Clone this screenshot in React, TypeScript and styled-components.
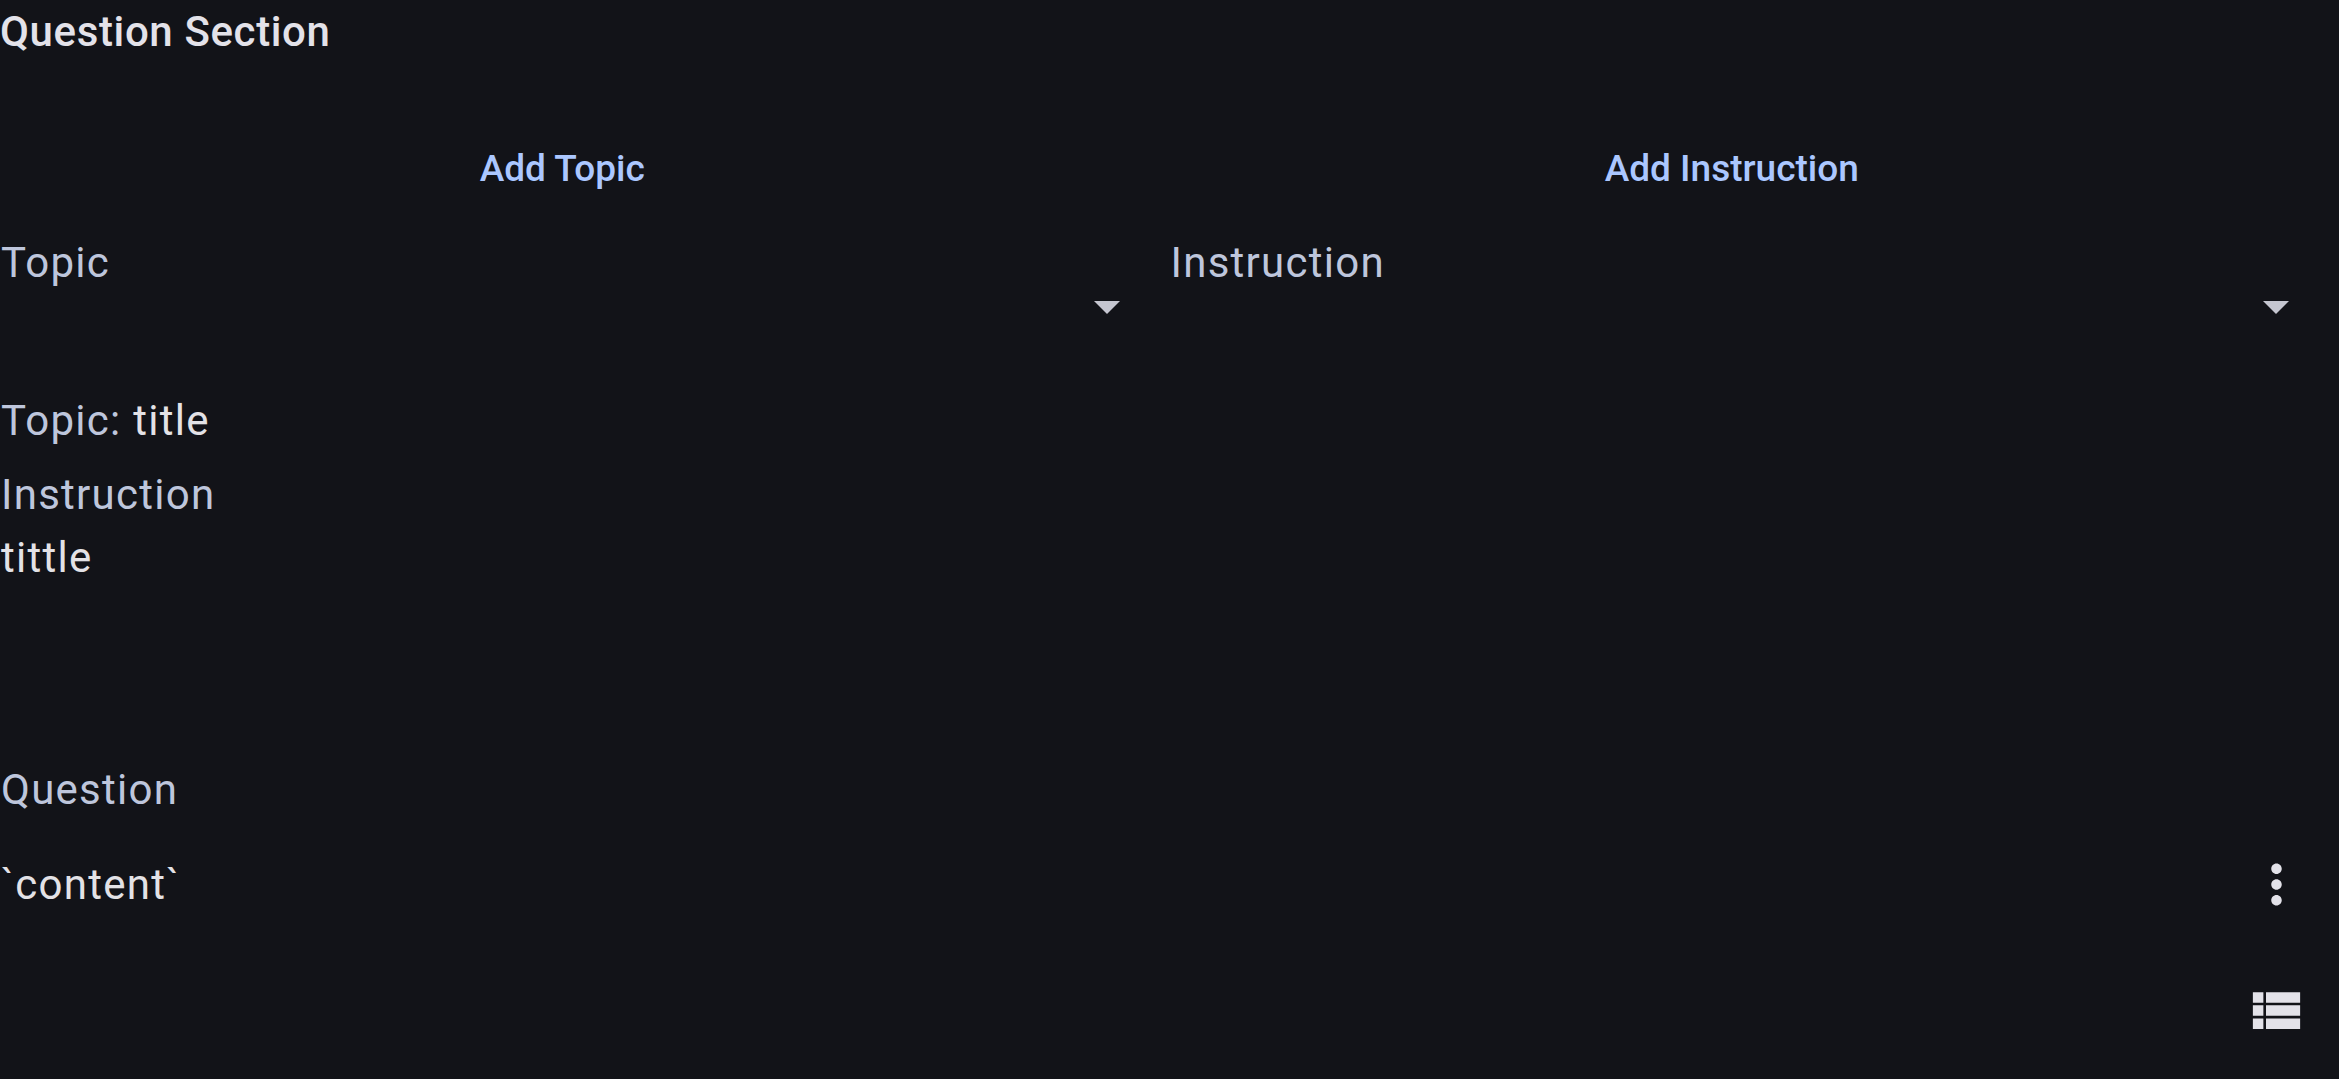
import React from "react";
import styled, { createGlobalStyle } from "styled-components";

const Global = createGlobalStyle`
  *, *::before, *::after { box-sizing: border-box; }
  body { margin: 0; background: #121318; color: #e3e2e9; font-family: Roboto, "Liberation Sans", sans-serif; }
`;

const Page = styled.main`
  display: flex;
  flex-direction: column;
  min-height: 100vh;
  background: #121318;
`;

const Heading = styled.h1`
  margin: 0;
  font-size: 42px;
  line-height: 63px;
  font-weight: 500;
  letter-spacing: 0.015em;
`;

const Columns = styled.div`
  display: grid;
  grid-template-columns: 1fr 1fr;
`;

const ActionRow = styled(Columns)`
  padding: 53px 45px 0 0;
  column-gap: 45px;
`;

const SelectRow = styled(Columns)`
  padding: 10px 0 27px;
`;

const TextButton = styled.button`
  height: 105px;
  padding: 0;
  border: 0;
  background: transparent;
  color: #abc7ff;
  font: 500 37px/53px Roboto, "Liberation Sans", sans-serif;
  cursor: pointer;
`;

const Field = styled.div`
  display: flex;
  flex-direction: column;
`;

const Label = styled.label`
  padding-left: 1px;
  color: #bec6dc;
  font-size: 42px;
  line-height: 63px;
  letter-spacing: 0.03em;
`;

const SelectWrap = styled.div`
  display: grid;
  align-items: center;
  justify-items: end;
  padding-right: 50px;
`;

const Select = styled.select`
  grid-area: 1 / 1;
  width: 100%;
  height: 26px;
  border: 0;
  appearance: none;
  background: transparent;
  color: inherit;
  font: inherit;
`;

const Arrow = styled.svg`
  grid-area: 1 / 1;
  width: 26px;
  height: 13px;
  fill: #c5c6d0;
  pointer-events: none;
`;

const Line = styled.p<{ $muted?: boolean }>`
  margin: 0;
  padding-left: 1px;
  font-size: 42px;
  line-height: 63px;
  letter-spacing: 0.03em;
  color: ${(p) => (p.$muted ? "#bec6dc" : "#e3e2e6")};
`;

const Value = styled.span`
  color: #e3e2e6;
`;

const Summary = styled.section`
  display: flex;
  flex-direction: column;
  padding-top: 42px;
`;

const InstructionBlock = styled.div`
  padding-top: 11px;
`;

const QuestionBlock = styled.section`
  padding-top: 169px;
`;

const QuestionRow = styled.div`
  display: flex;
  align-items: center;
  justify-content: space-between;
`;

const IconButton = styled.button`
  display: grid;
  place-items: center;
  width: 126px;
  height: 126px;
  padding: 0;
  border: 0;
  background: transparent;
  color: #e3e2e9;
  cursor: pointer;
`;

const Icon = styled.svg`
  width: 63px;
  height: 63px;
  fill: currentColor;
`;

const Footer = styled.footer`
  display: flex;
  justify-content: flex-end;
`;

function Picker({ id, label }: { id: string; label: string }) {
  return (
    <Field>
      <Label htmlFor={id}>{label}</Label>
      <SelectWrap>
        <Select id={id} defaultValue=""><option value="" /></Select>
        <Arrow viewBox="0 0 26 13" aria-hidden="true"><path d="M0 0h26L13 13z" /></Arrow>
      </SelectWrap>
    </Field>
  );
}

export default function App() {
  return (
    <Page>
      <Global />
      <Heading>Question Section</Heading>
      <ActionRow>
        <TextButton type="button">Add Topic</TextButton>
        <TextButton type="button">Add Instruction</TextButton>
      </ActionRow>
      <SelectRow>
        <Picker id="topic" label="Topic" />
        <Picker id="instruction" label="Instruction" />
      </SelectRow>
      <Summary>
        <Line $muted>Topic: <Value>title</Value></Line>
        <InstructionBlock>
          <Line $muted>Instruction</Line>
          <Line>tittle</Line>
        </InstructionBlock>
      </Summary>
      <QuestionBlock>
        <Line $muted>Question</Line>
        <QuestionRow>
          <Line>`content`</Line>
          <IconButton type="button" aria-label="More options">
            <Icon viewBox="0 0 24 24"><path d="M12 8c1.100 0 2-.9 2-2s-.9-2-2-2-2 .9-2 2 .9 2 2 2zm0 2c-1.100 0-2 .9-2 2s.9 2 2 2 2-.9 2-2-.9-2-2-2zm0 6c-1.100 0-2 .9-2 2s.9 2 2 2 2-.9 2-2-.9-2-2-2z" /></Icon>
          </IconButton>
        </QuestionRow>
      </QuestionBlock>
      <Footer>
        <IconButton type="button" aria-label="List view">
          <Icon viewBox="0 0 24 24"><path d="M3 14h4v-4H3v4zm0 5h4v-4H3v4zM3 9h4V5H3v4zm5 5h13v-4H8v4zm0 5h13v-4H8v4zM8 5v4h13V5H8z" /></Icon>
        </IconButton>
      </Footer>
    </Page>
  );
}
